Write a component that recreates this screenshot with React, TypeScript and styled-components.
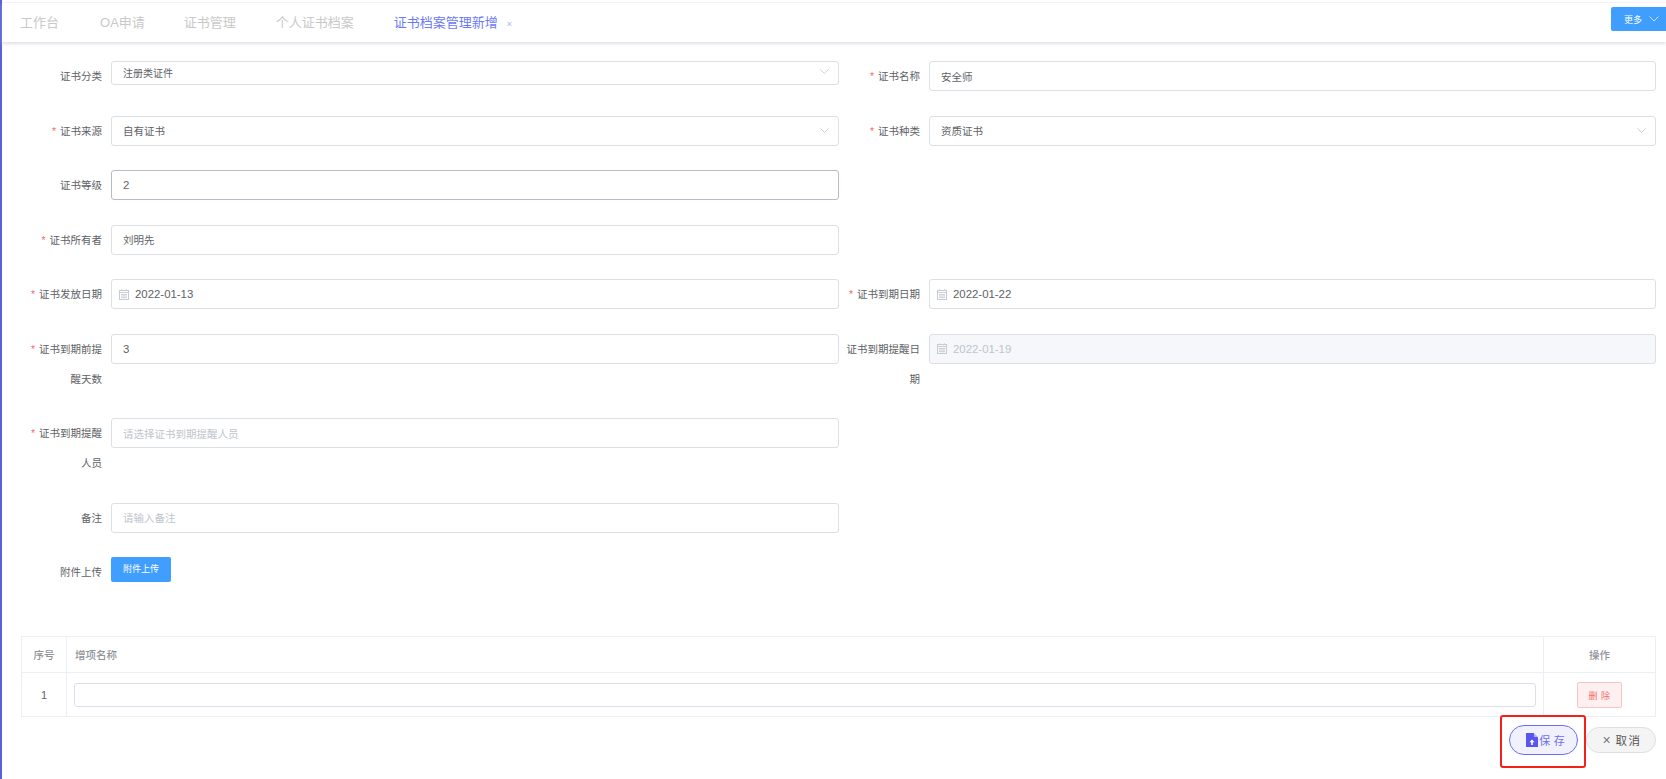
import React from "react";
import styled, { createGlobalStyle } from "styled-components";

const Global = createGlobalStyle`
  html, body { margin: 0; padding: 0; background: #fff; }
  body { font-family: "Liberation Sans", "Noto Sans CJK SC", sans-serif; color: #606266; }
  * { box-sizing: border-box; }
`;

const Page = styled.div`
  display: flex;
  width: 1666px;
  height: 779px;
  overflow: hidden;
  background: #fff;
`;
const SideEdge = styled.div`
  width: 2px;
  flex: none;
  background: #5a5fdc;
`;
const Main = styled.div`
  flex: 1;
  min-width: 0;
  display: flex;
  flex-direction: column;
`;
const TabBar = styled.div`
  flex: none;
  display: flex;
  align-items: center;
  border-top: 1px solid #f3f3f5;
  margin-top: 2px;
  height: 40px;
  box-shadow: 0 2px 3px rgba(200, 203, 215, 0.55);
`;
const Tab = styled.div<{ $active?: boolean }>`
  font-size: 13px;
  line-height: 18px;
  padding: 0 20px;
  color: ${(p) => (p.$active ? "#6b7af2" : "#c9c9c9")};
  display: flex;
  align-items: center;
  &:first-child { padding-left: 18px; }
  &:nth-child(2) { padding: 0 19px 0 21px; }
`;
const TabClose = styled.span`
  font-size: 9px;
  color: #a9aef0;
  margin-left: 9px;
  margin-top: 2px;
`;
const MoreButton = styled.button`
  margin-left: auto;
  width: 55px;
  height: 24px;
  margin-top: -7px;
  border: 0;
  border-radius: 2px 0 0 2px;
  background: #409eff;
  color: #fff;
  font: 9px "Liberation Sans", "Noto Sans CJK SC", sans-serif;
  display: flex;
  align-items: center;
  justify-content: flex-start;
  padding: 0 0 0 13px;
  gap: 7px;
`;
const Form = styled.div`
  display: grid;
  grid-template-columns: 811px 810px;
  column-gap: 7px;
  row-gap: 24.5px;
  padding: 19px 0 0 26px;
`;
const Item = styled.div`
  display: flex;
  align-items: flex-start;
  min-height: 30px;
`;
const Label = styled.div`
  width: 83px;
  flex: none;
  padding-right: 9px;
  font-size: 10.5px;
  line-height: 30px;
  text-align: right;
  color: #606266;
`;
const Required = styled.span`
  color: #f56c6c;
  margin-right: 4px;
`;
const Field = styled.div<{ $short?: boolean; $focus?: boolean; $disabled?: boolean; $date?: boolean }>`
  flex: 1;
  min-width: 0;
  height: ${(p) => (p.$short ? "24px" : "30px")};
  border: 1px solid ${(p) => (p.$focus ? "#b9b9cc" : "#dcdfe6")};
  border-radius: 3px;
  background: ${(p) => (p.$disabled ? "#f5f7fa" : "#fff")};
  display: flex;
  align-items: center;
  padding: ${(p) => (p.$short ? "0 8px 2px 11px" : p.$date ? "0 8px 0 7px" : "0 8px 0 11px")};
  font-size: ${(p) => (p.$short ? "10px" : "10.5px")};
  color: ${(p) => (p.$disabled ? "#c0c4cc" : "#606266")};
`;
const DateValue = styled.span`
  font-size: 11.4px;
  margin-left: 6px;
`;
const Number = styled.span`
  font-size: 11.4px;
`;
const Placeholder = styled.span`
  color: #c0c4cc;
`;
const Arrow = styled.svg<{ $push?: boolean }>`
  margin-left: ${(p) => (p.$push ? "auto" : "0")};
  margin-right: 1px;
  flex: none;
`;
const UploadButton = styled.button`
  width: 60px;
  height: 25px;
  border: 0;
  border-radius: 2px;
  background: #409eff;
  color: #fff;
  font: 9px "Liberation Sans", "Noto Sans CJK SC", sans-serif;
  padding: 0 0 2px;
`;
const Table = styled.table`
  border-collapse: collapse;
  table-layout: fixed;
  width: 1635px;
  margin: 49px 0 0 19px;
  font-size: 10.5px;
  th, td { border: 1px solid #ebeef5; padding: 0; }
  th { height: 36px; font-weight: 500; color: #909399; }
`;
const NameHead = styled.th`
  text-align: left;
  && { padding-left: 8px; }
`;
const IndexCell = styled.td`
  text-align: center;
  font-size: 11px;
  height: 44px;
`;
const NameCell = styled.td`
  && { padding: 0 7px 0 7px; }
`;
const ActionCell = styled.td`
  text-align: center;
`;
const CellInput = styled.div`
  height: 24px;
  border: 1px solid #dcdfe6;
  border-radius: 3px;
  background: #fff;
`;
const DeleteButton = styled.button`
  display: block;
  margin: 1px auto 0;
  width: 45px;
  height: 26px;
  border: 1px solid #fbc4c4;
  border-radius: 2px;
  background: #fef0f0;
  color: #f56c6c;
  font: 9px "Liberation Sans", "Noto Sans CJK SC", sans-serif;
  letter-spacing: 0.5px;
  padding: 0;
`;
const Footer = styled.div`
  display: flex;
  justify-content: flex-end;
  align-items: center;
  gap: 8px;
  width: 1654px;
  margin-top: 8px;
  position: relative;
`;
const SaveButton = styled.button`
  width: 69px;
  height: 30px;
  border: 1px solid #6d6df2;
  border-radius: 15px;
  background: #f0f1fd;
  color: #6d6df2;
  font: 11px "Liberation Sans", "Noto Sans CJK SC", sans-serif;
  display: flex;
  align-items: center;
  justify-content: center;
  letter-spacing: 0.2px;
  padding: 0 0 0 4px;
`;
const CancelButton = styled.button`
  width: 70px;
  height: 26px;
  border: 1px solid #dcdfe6;
  border-radius: 13px;
  background: #f4f4f5;
  color: #555;
  font: 11.5px "Liberation Sans", "Noto Sans CJK SC", sans-serif;
  letter-spacing: 1.5px;
  padding: 0 0 0 2px;
  display: flex;
  align-items: center;
  justify-content: center;
`;
const CancelMark = styled.span`
  font-size: 14px;
  letter-spacing: 0;
  color: #777;
  margin-right: 5px;
`;
const RedFrame = styled.div`
  position: absolute;
  left: 1498px;
  top: -10px;
  width: 86px;
  height: 53px;
  border: 2px solid #f5201a;
  border-radius: 3px;
  pointer-events: none;
`;

const Chevron = ({ w = 9, color = "#c0c4cc", push = true }: { w?: number; color?: string; push?: boolean }) => (
  <Arrow $push={push} width={w} height={w * 0.6} viewBox="0 0 10 6" fill="none">
    <path d="M0.5 0.5 L5 5 L9.5 0.5" stroke={color} strokeWidth="0.9" />
  </Arrow>
);

const CalendarIcon = () => (
  <svg width="10" height="11" viewBox="0 0 10 11" fill="none" style={{ flex: "none" }}>
    <rect x="0.5" y="1.5" width="9" height="9" stroke="#c6cad2" strokeWidth="1" />
    <path d="M0.5 3.5H9.5M2.5 0.3V2M7.5 0.3V2M2 5.5H8M2 7H8M2 8.6H8" stroke="#c6cad2" strokeWidth="0.9" />
  </svg>
);

const FileIcon = () => (
  <svg width="12" height="14" viewBox="0 0 12 14" style={{ flex: "none", marginRight: 1 }}>
    <path d="M0 0H7.5L12 4.5V14H0Z" fill="#5a55ee" />
    <path d="M8 0.5L11.5 4H8Z" fill="#b9b6f8" />
    <path d="M6 6.5L8.6 9.2H6.8V12H5.2V9.2H3.4Z" fill="#fff" />
  </svg>
);

const FormLabel = ({ req, text }: { req?: boolean; text: string }) => (
  <Label>
    {req && <Required>*</Required>}
    {text}
  </Label>
);

export default function App() {
  return (
    <Page>
      <Global />
      <SideEdge />
      <Main>
        <TabBar>
          <Tab>工作台</Tab>
          <Tab>OA申请</Tab>
          <Tab>证书管理</Tab>
          <Tab>个人证书档案</Tab>
          <Tab $active>
            证书档案管理新增<TabClose>×</TabClose>
          </Tab>
          <MoreButton>
            更多
            <Chevron w={10} color="#d7e9ff" push={false} />
          </MoreButton>
        </TabBar>
        <Form>
          <Item>
            <FormLabel text="证书分类" />
            <Field $short>
              注册类证件
              <Chevron />
            </Field>
          </Item>
          <Item>
            <FormLabel req text="证书名称" />
            <Field>安全师</Field>
          </Item>
          <Item>
            <FormLabel req text="证书来源" />
            <Field>
              自有证书
              <Chevron />
            </Field>
          </Item>
          <Item>
            <FormLabel req text="证书种类" />
            <Field>
              资质证书
              <Chevron />
            </Field>
          </Item>
          <Item>
            <FormLabel text="证书等级" />
            <Field $focus>
              <Number>2</Number>
            </Field>
          </Item>
          <Item />
          <Item>
            <FormLabel req text="证书所有者" />
            <Field>刘明先</Field>
          </Item>
          <Item />
          <Item>
            <FormLabel req text="证书发放日期" />
            <Field $date>
              <CalendarIcon />
              <DateValue>2022-01-13</DateValue>
            </Field>
          </Item>
          <Item>
            <FormLabel req text="证书到期日期" />
            <Field $date>
              <CalendarIcon />
              <DateValue>2022-01-22</DateValue>
            </Field>
          </Item>
          <Item>
            <FormLabel req text="证书到期前提醒天数" />
            <Field>
              <Number>3</Number>
            </Field>
          </Item>
          <Item>
            <FormLabel text="证书到期提醒日期" />
            <Field $disabled $date>
              <CalendarIcon />
              <DateValue>2022-01-19</DateValue>
            </Field>
          </Item>
          <Item>
            <FormLabel req text="证书到期提醒人员" />
            <Field>
              <Placeholder>请选择证书到期提醒人员</Placeholder>
            </Field>
          </Item>
          <Item />
          <Item>
            <FormLabel text="备注" />
            <Field>
              <Placeholder>请输入备注</Placeholder>
            </Field>
          </Item>
          <Item />
          <Item>
            <FormLabel text="附件上传" />
            <UploadButton>附件上传</UploadButton>
          </Item>
          <Item />
        </Form>
        <Table>
          <colgroup>
            <col style={{ width: 45 }} />
            <col />
            <col style={{ width: 112 }} />
          </colgroup>
          <thead>
            <tr>
              <th>序号</th>
              <NameHead>增项名称</NameHead>
              <th>操作</th>
            </tr>
          </thead>
          <tbody>
            <tr>
              <IndexCell>1</IndexCell>
              <NameCell>
                <CellInput />
              </NameCell>
              <ActionCell>
                <DeleteButton>删 除</DeleteButton>
              </ActionCell>
            </tr>
          </tbody>
        </Table>
        <Footer>
          <SaveButton>
            <FileIcon />
            保 存
          </SaveButton>
          <CancelButton>
            <CancelMark>×</CancelMark>取消
          </CancelButton>
          <RedFrame />
        </Footer>
      </Main>
    </Page>
  );
}
